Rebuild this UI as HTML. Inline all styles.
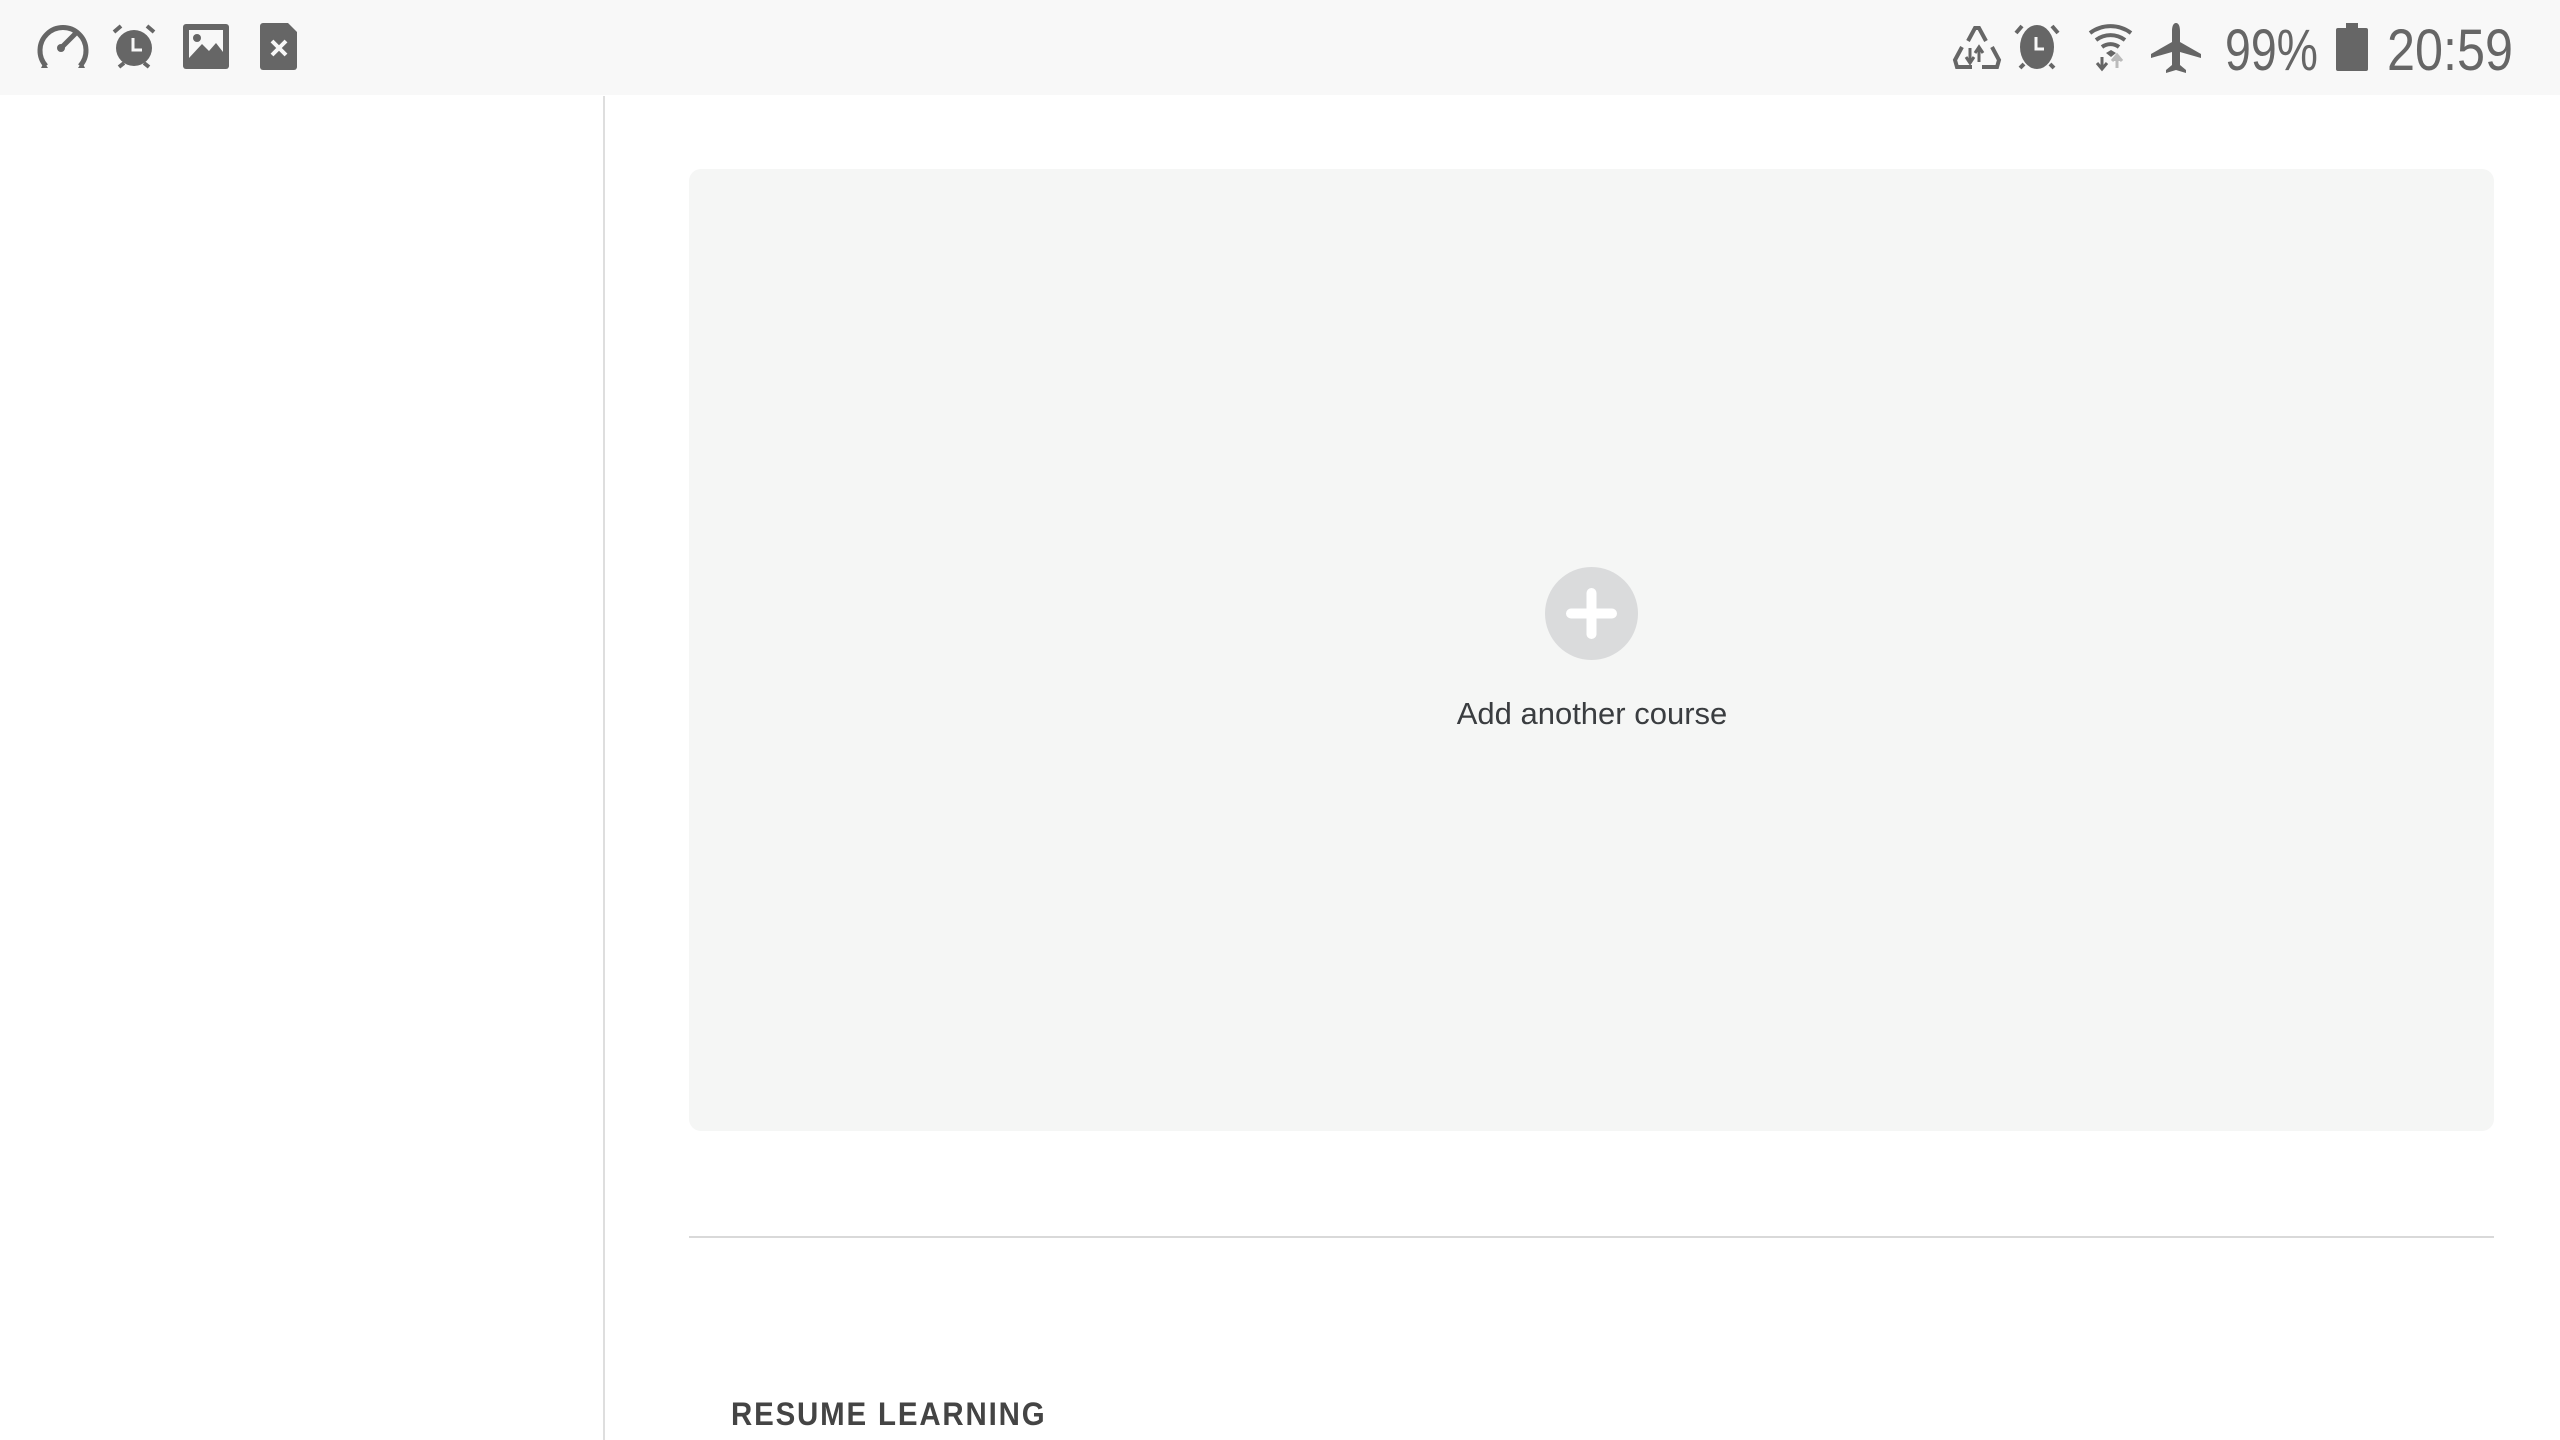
<!DOCTYPE html>
<html><head><meta charset="utf-8"><style>
html,body{margin:0;padding:0;width:2560px;height:1440px;overflow:hidden;background:#fff;font-family:"Liberation Sans",sans-serif}
.sb{position:absolute;left:0;top:0;width:2560px;height:95px;background:#f8f8f8}
.vl{position:absolute;left:603px;top:96px;width:2px;height:1344px;background:#dedede}
.card{position:absolute;left:689px;top:169px;width:1805px;height:962px;background:#f5f6f5;border-radius:12px}
.circ{position:absolute;left:1545px;top:567px;width:93px;height:93px;border-radius:50%;background:#dadbdc}
.t1{position:absolute;left:1392px;width:400px;top:696px;text-align:center;font-size:31px;color:#3a3d40}
.hr{position:absolute;left:689px;top:1236px;width:1805px;height:2px;background:#d9d9d9}
.t2{position:absolute;left:731px;top:1396px;font-size:32px;letter-spacing:2px;color:#444;font-weight:bold;transform:scaleX(.92);transform-origin:left}
</style></head><body>
<div class="sb">
<svg width="2560" height="95" style="position:absolute;left:0;top:0">
<g fill="#666" stroke="#666">
 <path d="M46 66 A23 23 0 1 1 80 66" fill="none" stroke-width="5"/>
 <path d="M44 62 l4 6 -7 0z M82 62 l-4 6 7 0z" stroke="none"/>
 <circle cx="61" cy="48" r="4" stroke="none"/>
 <path d="M61 48 L76 33" stroke-width="5"/>
 <circle cx="134" cy="48" r="18" stroke="none"/>
 <path d="M114 32 l7 -6 M154 32 l-7 -6 M119 67 l5 -4 M149 67 l-5 -4" stroke-width="4"/>
 <path d="M133 38 v12 h9" stroke="#f8f8f8" stroke-width="3" fill="none"/>
 <rect x="183" y="24" width="46" height="45" rx="3" stroke="none"/>
 <rect x="189" y="30" width="34" height="28" fill="#f8f8f8" stroke="none"/>
 <path d="M189 58 L202 44 L209 51 L216 43 L223 52 L223 58z" stroke="none"/>
 <circle cx="197" cy="38" r="4" stroke="none"/>
 <path d="M263 23 H288 L297 32 V67 a3 3 0 0 1 -3 3 H263 a3 3 0 0 1 -3 -3 V26 a3 3 0 0 1 3 -3z" stroke="none"/>
 <path d="M272 41 l14 14 M286 41 l-14 14" stroke="#f8f8f8" stroke-width="4"/>
 <path d="M1968 41 L1975 28 H1979 L1986 41 M1962 47 L1955 60 L1957 67 H1972 M1982 67 H1997 L1999 60 L1992 47" fill="none" stroke-width="4"/>
 <path d="M1970 48 v14 M1966 57 l4 6 4 -6 M1979 62 v-14 M1975 53 l4 -6 4 6" stroke-width="3" fill="none"/>
 <ellipse cx="2037" cy="47" rx="17" ry="22" stroke="none"/>
 <path d="M2016 33 l6 -7 M2058 33 l-6 -7 M2020 68 l4 -4 M2054 68 l-4 -4" stroke-width="4"/>
 <path d="M2036 37 v12 h8" stroke="#f8f8f8" stroke-width="3" fill="none"/>
 <path d="M2090 33 A34 34 0 0 1 2131 33 M2096 40 A24 24 0 0 1 2125 40 M2102 47 A14 14 0 0 1 2119 47" fill="none" stroke-width="4"/>
 <path d="M2106 53 l5 -3 5 3 -5 4z" stroke="none"/>
 <path d="M2102 57 v12 M2097 63 l5 6 5 -6" stroke-width="3" fill="none"/>
 <path d="M2117 68 v-12 M2112 61 l5 -6 5 6" stroke="#bbb" fill="#bbb" stroke-width="3"/>
 <path d="M2176 23 c3 0 4 4 4 8 v11 l21 12 v4 l-21 -6 v13 l6 5 v3 l-10 -3 -10 3 v-3 l6 -5 v-13 l-21 6 v-4 l21 -12 v-11 c0 -4 1 -8 4 -8z" stroke="none"/>
 <rect x="2336" y="28" width="32" height="43" rx="2" stroke="none"/>
 <rect x="2346" y="23" width="12" height="6" stroke="none"/>
</g>
<g fill="#666" font-family="Liberation Sans" font-size="58">
 <text x="2225" y="70" textLength="93" lengthAdjust="spacingAndGlyphs">99%</text>
 <text x="2387" y="70" textLength="126" lengthAdjust="spacingAndGlyphs">20:59</text>
</g>
</svg>
</div>
<div class="vl"></div>
<div class="card"></div>
<div class="circ"><svg width="93" height="93"><path d="M46.5 26 V67 M26 46.5 H67" stroke="#fff" stroke-width="10" stroke-linecap="round"/></svg></div>
<div class="t1">Add another course</div>
<div class="hr"></div>
<div class="t2">RESUME LEARNING</div>
</body></html>
